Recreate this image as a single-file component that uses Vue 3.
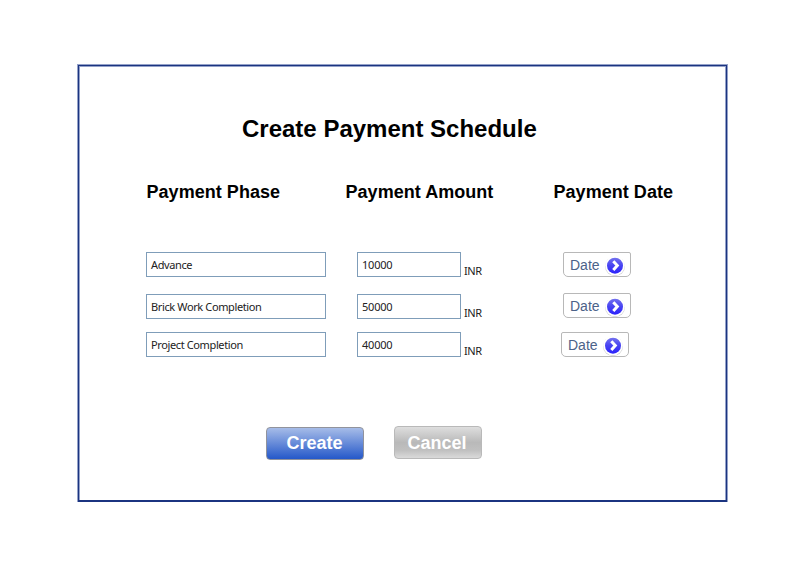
<script setup>
const rows = [
  { key: 'a', phase: 'Advance', amount: '10000' },
  { key: 'b', phase: 'Brick Work Completion', amount: '50000' },
  { key: 'c', phase: 'Project Completion', amount: '40000' },
]
</script>

<template>
  <main class="page">
    <section class="frame">
      <div class="panel">
        <div class="content">
          <h1><span>Create Payment Schedule</span></h1>
          <div class="heads">
            <h2 class="h-phase">Payment Phase</h2>
            <h2 class="h-amount">Payment Amount</h2>
            <h2 class="h-date">Payment Date</h2>
          </div>
          <div v-for="row in rows" :key="row.key" class="row" :class="'row-' + row.key">
            <div class="field phase"><span>{{ row.phase }}</span></div>
            <div class="field amount"><span>{{ row.amount }}</span></div>
            <span class="unit">INR</span>
            <button class="date">
              <span>Date</span>
              <svg width="22" height="22" viewBox="0 0 22 22">
                <defs>
                  <linearGradient id="ball" x1="0" y1="0" x2="0" y2="1">
                    <stop offset="0" stop-color="#7472ee" />
                    <stop offset="0.5" stop-color="#4743f2" />
                    <stop offset="1" stop-color="#2c22fc" />
                  </linearGradient>
                </defs>
                <circle cx="11" cy="11.2" r="10" fill="#d4d4d4" />
                <circle cx="11" cy="10.5" r="9.8" fill="#fff" />
                <circle cx="11" cy="10.7" r="8" fill="url(#ball)" />
                <path d="M9.3 6.3 L13.3 10.6 L9.3 14.9" fill="none" stroke="#fff" stroke-width="3" />
              </svg>
            </button>
          </div>
          <div class="actions">
            <button class="create">Create</button>
            <button class="cancel">Cancel</button>
          </div>
        </div>
      </div>
    </section>
  </main>
</template>

<style>
body { background: #fff; }
</style>

<style scoped>
* { box-sizing: border-box; }
.page { width: 794px; height: 579px; padding: 64px 0 0 77px; font-family: "Liberation Sans", Arial, sans-serif; color: #000; }
.frame { width: 651px; height: 438px; border: 1px solid #94a1c9; border-bottom: 0; }
.panel { height: 437px; border: 1px solid #1b3480; border-bottom-width: 2px; }
.content { height: 434px; border: 1px solid #94a1c9; border-bottom: 0; }
h1, h2 { margin: 0; font-weight: bold; white-space: nowrap; }
h1 { padding: 48px 0 0 162px; font-size: 24px; line-height: 28px; }
.heads { display: flex; margin-top: 38px; padding-left: 66.5px; height: 22px; }
h2 { font-size: 18px; line-height: 22px; letter-spacing: 0.04px; }
.h-phase { width: 199px; }
.h-amount { width: 208px; }
.row { display: flex; height: 25px; padding-left: 66px; }
.row-a { margin-top: 49px; }
.row-b { margin-top: 17px; }
.row-c { margin-top: 13px; }
.field { height: 25px; border: 1px solid #7f9db9; padding-left: 4px; font: 11px/24px "Noto Sans", sans-serif; color: #222; white-space: nowrap; }
.phase { width: 180px; letter-spacing: -0.38px; }
.amount { width: 104px; margin-left: 31px; letter-spacing: -0.2px; }
.unit { width: 24px; margin-left: 3px; padding-top: 11px; font: 11px/16px "Noto Sans", sans-serif; letter-spacing: -0.4px; color: #222; }
.date { display: flex; align-items: center; width: 68px; height: 25px; margin-left: 75px; padding: 0 0 0 6px; border: 1px solid #b8b8b8; border-width: 1px 1.5px; border-radius: 2px 2px 5px 5px; background: #fff; color: #4c6289; font: 14px/22px "Liberation Sans", sans-serif; }
.date span { width: 34px; text-align: left; }
.date svg { flex: none; margin-top: 2px; }
.row-b .date { margin-top: -1px; }
.row-c .date { margin-left: 73px; }
.actions { display: flex; margin-top: 69px; padding-left: 186px; }
.actions button { height: 33px; padding: 0 2px 0 0; color: #fff; font: bold 18px/30px "Liberation Sans", sans-serif; border-radius: 4px; }
.actions .create { width: 98px; margin-top: 1px; padding: 0 1px 2px 0; border: 1px solid #91939c; background: linear-gradient(#a6bce8, #6c8fda 45%, #2558c9); }
.cancel { width: 88px; margin-left: 30px; border: 1px solid #b9b9b9; background: linear-gradient(#dedede, #b9b9b9 50%, #c0c0c0 75%, #dadada); }
</style>
